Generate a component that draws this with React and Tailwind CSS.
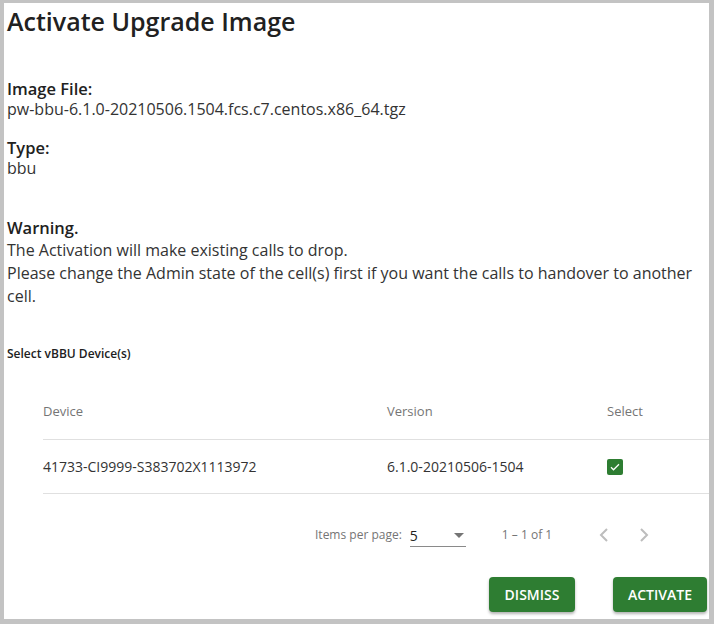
import React from "react";

export default function App() {
  return (
    <div className="w-[714px] h-[624px] bg-[#c3c3c3] pt-[3px] pl-[4px] pr-[5px] pb-[5px]" style={{ fontFamily: '"Open Sans", sans-serif' }}>
      <div className="w-full h-full bg-white pl-[3px] flex flex-col">
        <h1 className="text-[25px] leading-[32px] font-semibold text-[#212121] mt-[2px]">Activate Upgrade Image</h1>

        <div className="mt-[42px] text-[16px] leading-[20px] text-[#212121]">
          <div className="font-semibold text-[16.5px]">Image File:</div>
          <div className="font-normal text-[#333]">pw-bbu-6.1.0-20210506.1504.fcs.c7.centos.x86_64.tgz</div>
        </div>

        <div className="mt-[18px] text-[16px] leading-[21px] text-[#212121]">
          <div className="font-semibold text-[16.5px]">Type:</div>
          <div className="font-normal text-[#333]">bbu</div>
        </div>

        <div className="mt-[37px] text-[16px] leading-[23px] text-[#212121]">
          <div className="font-semibold text-[16.5px]">Warning.</div>
          <div className="font-normal text-[#333]">The Activation will make existing calls to drop.</div>
          <div className="font-normal text-[#333] pr-[10px]">Please change the Admin state of the cell(s) first if you want the calls to handover to another cell.</div>
        </div>

        <div className="mt-[38px] text-[12px] leading-[16px] font-semibold text-[#212121]">Select vBBU Device(s)</div>

        <div className="mt-[35px] ml-[36px] text-[13px]">
          <div className="flex items-center h-[30px] border-b border-[#e0e0e0] text-[#757575] pb-[12px] box-content">
            <div className="w-[344px]">Device</div>
            <div className="w-[220px]">Version</div>
            <div>Select</div>
          </div>
          <div className="flex items-center h-[54px] border-b border-[#e0e0e0] text-[#333] text-[14px]">
            <div className="w-[344px]">41733-CI9999-S383702X1113972</div>
            <div className="w-[220px]">6.1.0-20210506-1504</div>
            <div className="w-[16px] h-[16px] rounded-[2px] bg-[#2e7d32] flex items-center justify-center">
              <svg width="12" height="12" viewBox="0 0 24 24" fill="none" stroke="white" strokeWidth="2.5">
                <path d="M4 12.5l5 5L20 6.5" />
              </svg>
            </div>
          </div>
        </div>

        <div className="mt-[29px] flex items-center text-[12px] text-[#757575] pl-[308px]">
          <span>Items per page:</span>
          <div className="ml-[8px] w-[56px] border-b border-[#8a8a8a] flex items-center justify-between h-[24px] pt-[2px]">
            <span className="text-[14px] text-[#212121]">5</span>
            <svg width="10" height="5" viewBox="0 0 10 5" className="mr-[2px]"><path d="M0 0h10L5 5z" fill="#757575" /></svg>
          </div>
          <span className="ml-[36px]">1 – 1 of 1</span>
          <svg width="24" height="24" viewBox="0 0 24 24" className="ml-[40px]" fill="none" stroke="#bdbdbd" strokeWidth="2"><path d="M15 6l-6 6 6 6" /></svg>
          <svg width="24" height="24" viewBox="0 0 24 24" className="ml-[16px]" fill="none" stroke="#bdbdbd" strokeWidth="2"><path d="M9 6l6 6-6 6" /></svg>
        </div>

        <div className="mt-[30px] flex justify-end gap-[38px] pr-[2px]">
          <button className="w-[86px] h-[35px] rounded-[4px] bg-[#2e7d32] text-white text-[14px] font-semibold shadow-[0_2px_3px_rgba(0,0,0,0.3)]">DISMISS</button>
          <button className="w-[94px] h-[35px] rounded-[4px] bg-[#2e7d32] text-white text-[14px] font-semibold shadow-[0_2px_3px_rgba(0,0,0,0.3)]">ACTIVATE</button>
        </div>
      </div>
    </div>
  );
}
